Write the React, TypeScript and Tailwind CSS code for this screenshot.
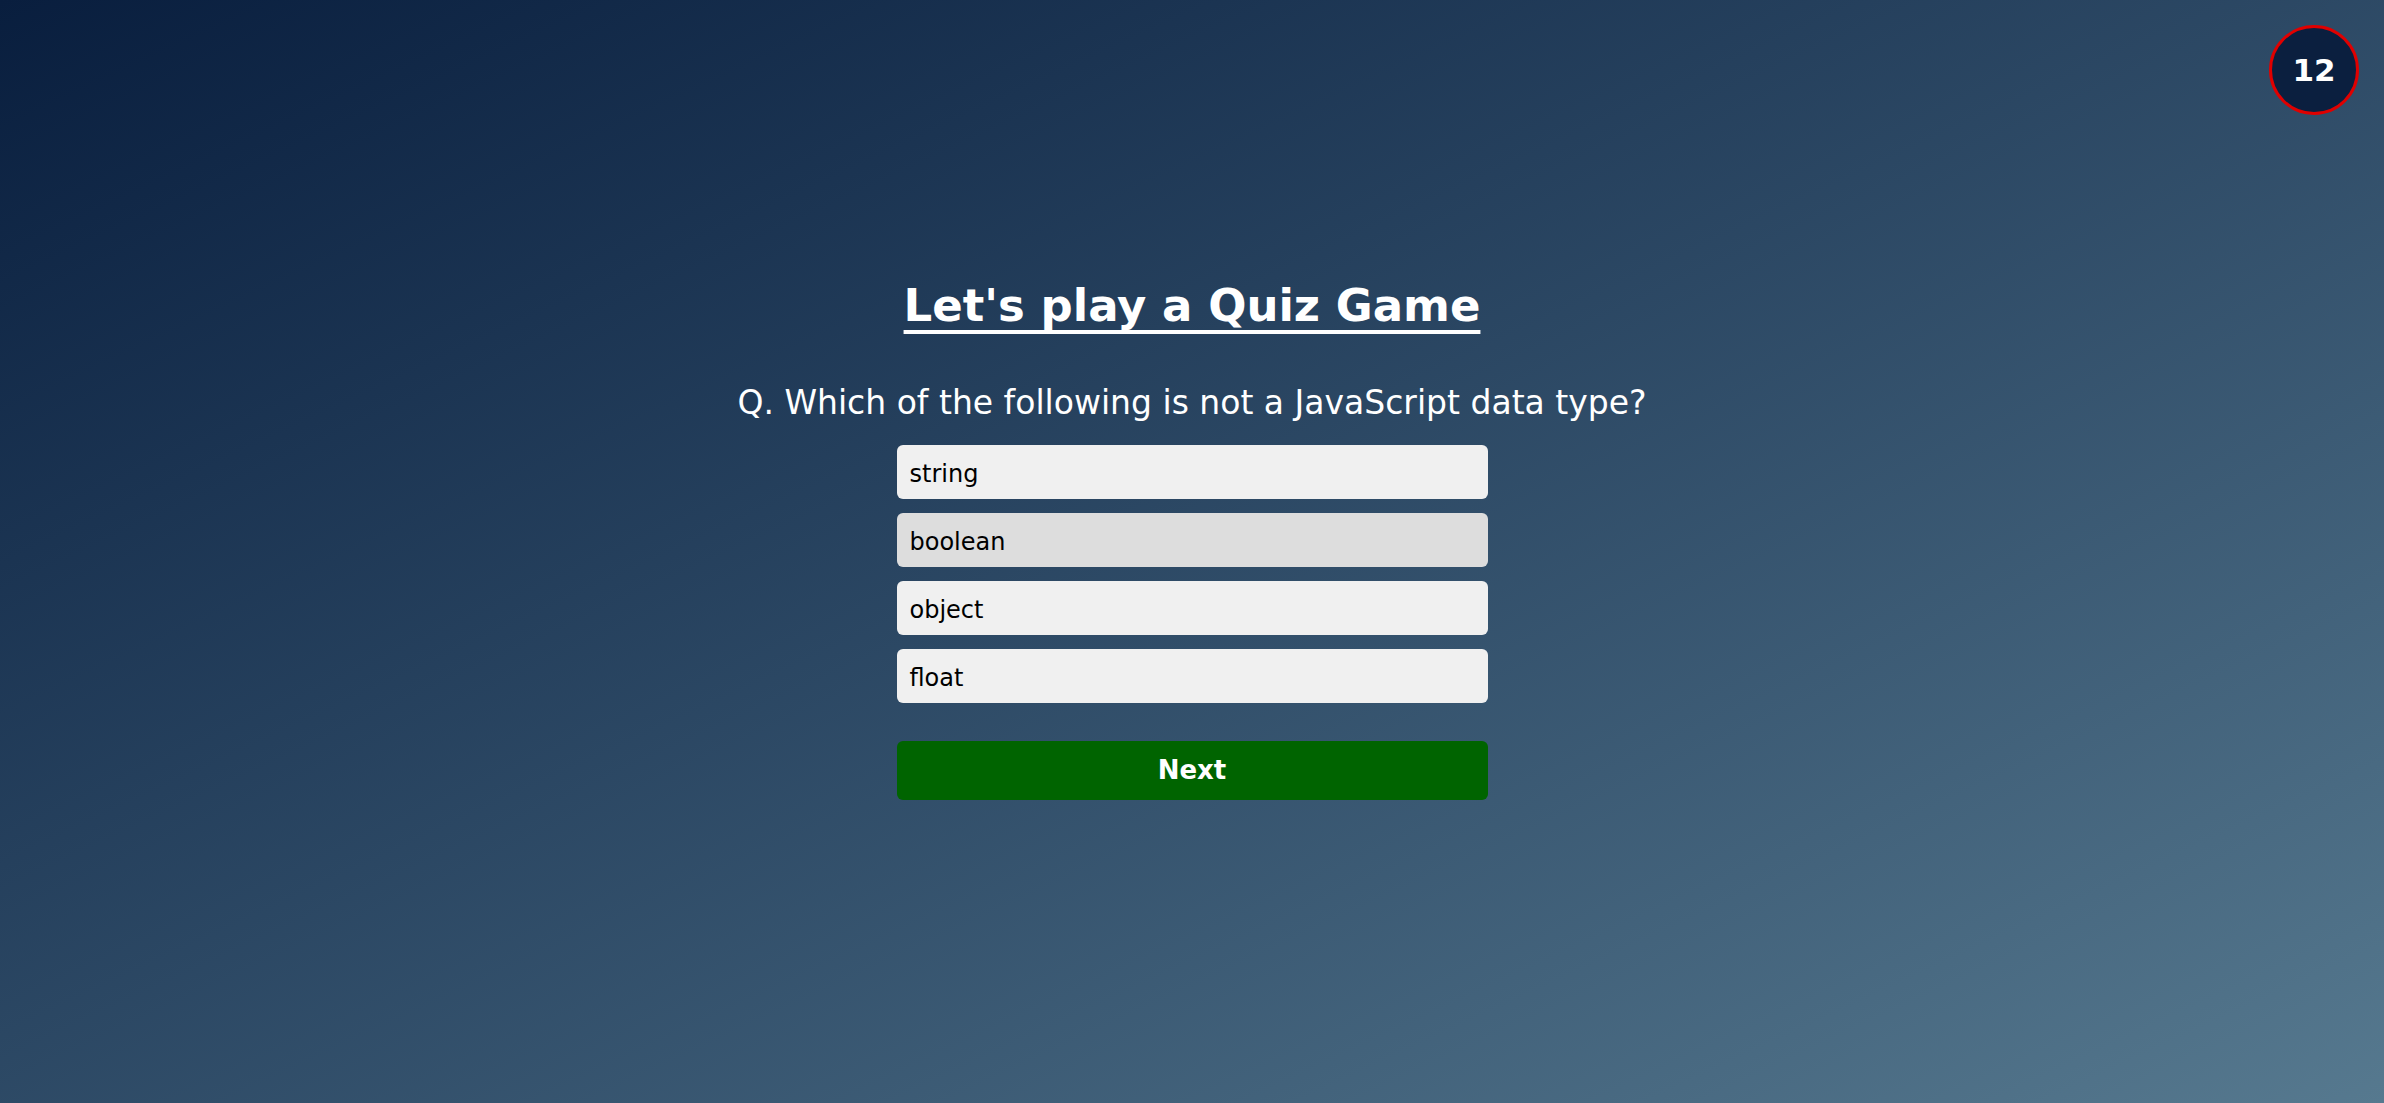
import React, { useState } from 'react';

const OPTIONS = ['string', 'boolean', 'object', 'float'];

const App: React.FC = () => {
  const [hovered, setHovered] = useState<number | null>(1);

  return (
    <div className="relative min-h-screen w-full overflow-hidden bg-gradient-to-br from-[#091e3e] to-[#56798f] font-['DejaVu_Sans',Verdana,sans-serif] text-white">
      <div className="absolute top-[25px] right-[25px] flex h-[90px] w-[90px] items-center justify-center rounded-full border-[3px] border-[#e00000] bg-[#0b1f3f] text-[31px] font-bold">
        12
      </div>

      <div className="flex flex-col items-center pt-[279px]">
        <h1 className="text-[45px] font-bold leading-[54px] underline decoration-[4px] underline-offset-[9px] [text-decoration-skip-ink:none]">
          Let's play a Quiz Game
        </h1>

        <p className="mt-[52px] text-[33px] leading-[36px]">
          Q. Which of the following is not a JavaScript data type?
        </p>

        <div className="mt-[24px] flex w-[591px] flex-col gap-[14px]">
          {OPTIONS.map((opt, i) => (
            <button
              key={opt}
              onMouseEnter={() => setHovered(i)}
              className={`flex h-[54px] items-center rounded-[6px] px-[13px] pt-[4px] text-left text-[24px] text-black ${
                hovered === i ? 'bg-[#dddddd]' : 'bg-[#f0f0f0]'
              }`}
            >
              {opt}
            </button>
          ))}
        </div>

        <button className="mt-[38px] h-[59px] w-[591px] rounded-[6px] bg-[#006400] text-[26px] font-bold text-white">
          Next
        </button>
      </div>
    </div>
  );
};

export default App;
